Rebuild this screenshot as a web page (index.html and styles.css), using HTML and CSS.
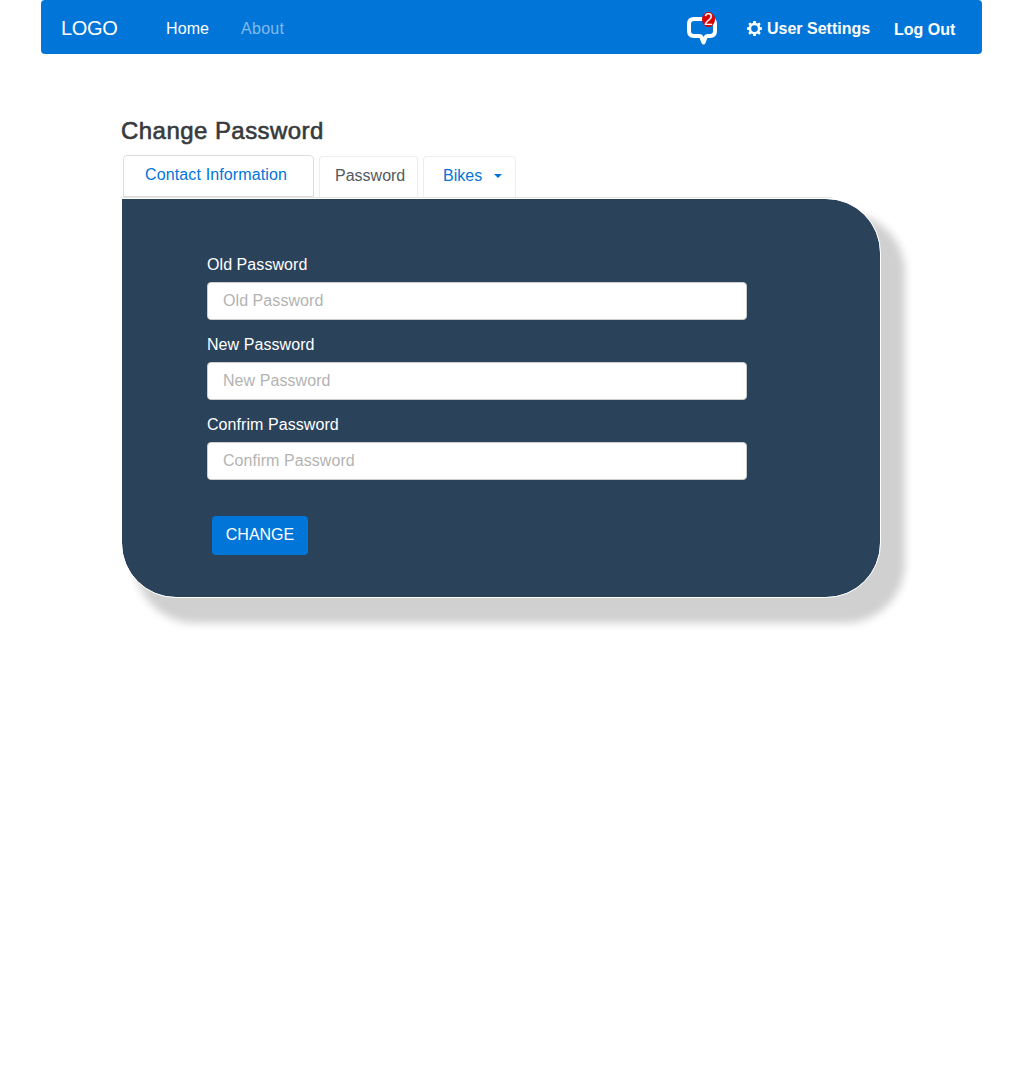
FILE: index.html
```html
<!DOCTYPE html>
<html lang="en">
<head>
<meta charset="utf-8">
<title>Change Password</title>
<link rel="stylesheet" href="styles.css">
</head>
<body>
<nav class="navbar">
  <a class="brand">LOGO</a>
  <a class="nav-link home">Home</a>
  <a class="nav-link about">About</a>
  <div class="messages">
    <svg width="30" height="29" viewBox="0 0 30 29" fill="none" stroke="#fff" stroke-width="4" stroke-linejoin="round"><path d="M7 3H23Q28 3 28 8V15Q28 20 23 20H20.500Q19 20 18.400 21.500L16.500 26.500L14.500 21.500Q14 20 12.500 20H7Q2 20 2 15V8Q2 3 7 3Z"/></svg>
    <span class="badge">2</span>
  </div>
  <a class="nav-bold settings">
    <svg class="gear" width="15" height="15" viewBox="0 0 16 16" fill="#fff" fill-rule="evenodd"><path d="M6.700 0H9.300L9.700 2.100L11.200 2.700L13 1.500L14.700 3.200L13.400 4.900L14 6.400L16 6.800V9.200L14 9.600L13.400 11.100L14.700 12.900L12.900 14.600L11.200 13.300L9.700 13.900L9.300 16H6.700L6.300 13.900L4.800 13.300L3.100 14.600L1.400 12.900L2.600 11.100L2 9.600L0 9.200V6.800L2 6.400L2.600 4.900L1.400 3.200L3.100 1.500L4.800 2.700L6.300 2.100ZM8 4.400A3.600 3.600 0 1 0 8 11.600A3.600 3.600 0 1 0 8 4.400Z"/></svg>
    <span>User Settings</span>
  </a>
  <a class="nav-bold logout">Log Out</a>
</nav>
<main class="content">
  <h1 class="title">Change Password</h1>
  <div class="tabs">
    <a class="tab tab-contact">Contact Information</a>
    <a class="tab tab-password">Password</a>
    <a class="tab tab-bikes">Bikes<span class="caret"></span></a>
  </div>
  <form class="panel">
    <label class="label" for="old">Old Password</label>
    <input class="field" id="old" placeholder="Old Password">
    <label class="label" for="new">New Password</label>
    <input class="field" id="new" placeholder="New Password">
    <label class="label" for="confirm">Confrim Password</label>
    <input class="field" id="confirm" placeholder="Confirm Password">
    <button class="submit" type="button">CHANGE</button>
  </form>
</main>
</body>
</html>
```
FILE: styles.css
```css
* { box-sizing: border-box; }
body {
  margin: 0;
  min-height: 100vh;
  background: #fff;
  font: 16px/24px "Liberation Sans", Arial, sans-serif;
}
.navbar {
  display: flex;
  align-items: flex-start;
  width: 941px;
  height: 54px;
  margin-left: 41px;
  padding-left: 20px;
  border-radius: 4px;
  background: #0275d8;
  color: #fff;
  white-space: nowrap;
}
.brand { width: 105px; padding-top: 16px; font-size: 20px; letter-spacing: -.3px; }
.nav-link { padding-top: 17px; }
.home { width: 75px; letter-spacing: .1px; }
.about { width: 446px; color: rgba(255,255,255,.5); letter-spacing: .3px; }
.messages { position: relative; width: 60px; height: 45px; padding-top: 16px; }
.messages svg { display: block; }
.badge {
  position: absolute;
  left: 15px;
  top: 12px;
  width: 13px;
  height: 15px;
  border-radius: 50%;
  background: #d80000;
  text-align: center;
  line-height: 16px;
}
.nav-bold { font-weight: bold; }
.settings { display: flex; width: 147px; padding-top: 17px; gap: 5px; }
.gear { margin-top: 4px; }
.logout { padding-top: 18px; }
.content { width: 760px; margin: 63px 0 0 121px; }
.title {
  height: 38px;
  margin: 0;
  font-size: 24px;
  line-height: 28px;
  font-weight: normal;
  letter-spacing: .45px;
  color: #373a3c;
  -webkit-text-stroke: .6px #373a3c;
  white-space: nowrap;
}
.tabs { display: flex; align-items: flex-end; gap: 5px; width: 711px; height: 43px; padding-left: 2px; border-bottom: 1px solid #e5e5e5; }
.tab { height: 41px; padding-top: 7px; border: 1px solid #eceeef; border-bottom: 0; border-radius: 4px 4px 0 0; color: #0275d8; white-space: nowrap; }
.tab-contact { width: 191px; height: 42px; padding-left: 21px; border: 1px solid #ddd; letter-spacing: .13px; }
.tab-password { width: 99px; padding-left: 15px; color: #55595c; }
.tab-bikes { display: flex; width: 93px; padding-left: 19px; }
.caret { width: 0; height: 0; margin: 10px 0 0 12px; border: 4px solid transparent; border-top-color: #0275d8; border-bottom: 0; }
.panel {
  display: flex;
  flex-direction: column;
  align-items: flex-start;
  height: 400px;
  padding: 54px 0 0 85px;
  border: 1px solid #fff;
  border-radius: 0 55px 55px 55px;
  background: #2b425b;
  background-clip: padding-box;
  box-shadow: 19px 20px 8px 5px #d0d0d0;
}
.label { height: 29px; color: #fff; letter-spacing: .07px; }
.field {
  width: 540px;
  height: 38px;
  margin-bottom: 13px;
  padding: 0 15px;
  border: 1px solid #ccc;
  border-radius: 4px;
  background: #fff;
  font: inherit;
  letter-spacing: .07px;
}
.field::placeholder { color: #b3b3b3; opacity: 1; }
.submit {
  width: 96px;
  height: 39px;
  margin: 23px 0 0 5px;
  padding: 0 0 2px;
  border: 0;
  border-radius: 4px;
  background: #0275d8;
  color: #fff;
  font: inherit;
}
```
